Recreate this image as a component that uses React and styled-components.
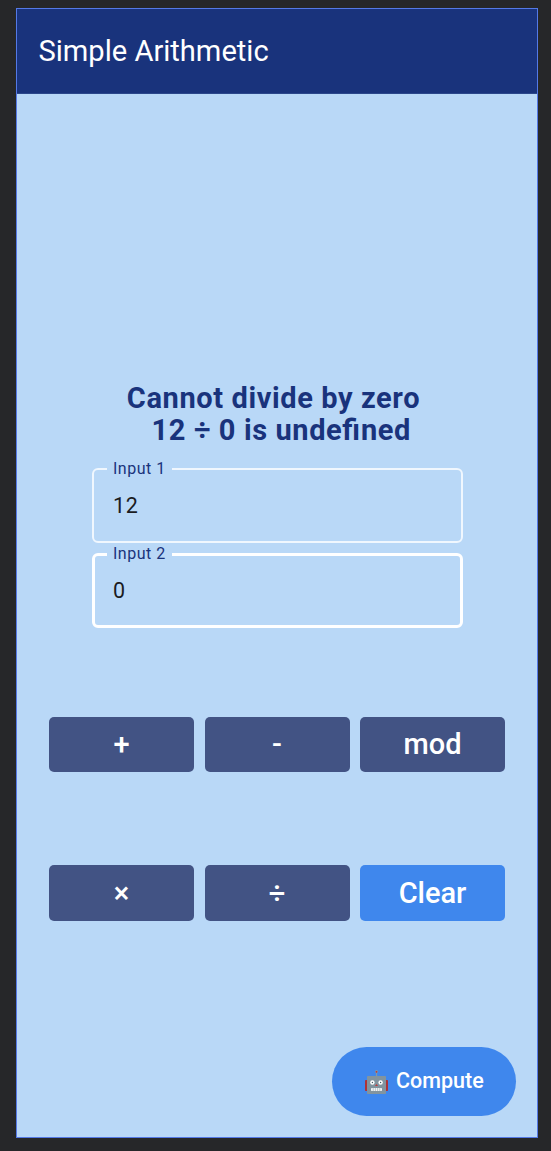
import React from "react";
import styled, { createGlobalStyle } from "styled-components";

const GlobalStyle = createGlobalStyle`
  *, *::before, *::after { box-sizing: border-box; }
  html, body { margin: 0; background: #262729; }
  body { font-family: Roboto, "Liberation Sans", sans-serif; }
`;

const Desk = styled.main`
  height: 1151px;
  padding: 8px 13px 13px 16px;
  background: #262729;
`;

const Screen = styled.div`
  display: flex;
  flex-direction: column;
  height: 1130px;
  border: 1px solid #5479e6;
  background: #b9d8f7;
`;

const AppBar = styled.header`
  display: flex;
  align-items: center;
  height: 85px;
  padding-left: 21.5px;
  border-bottom: 1px solid #2b478b;
  background: #19337c;
`;

const Title = styled.h1`
  margin: 0;
  color: #fff;
  font-size: 29.1px;
  font-weight: 400;
  line-height: 34px;
`;

const Content = styled.section`
  display: flex;
  flex: 1;
  flex-direction: column;
  padding: 288px 32px 21px;
`;

const Message = styled.p`
  margin: 0 0 14px;
  color: #19337c;
  font-size: 29px;
  font-weight: 700;
  letter-spacing: 0.6px;
  line-height: 32px;
  text-align: center;
  white-space: pre;
`;

const Line = styled.span`
  display: block;
  padding-left: ${(p) => p.$indent || 0}px;
  margin-left: -7px;
`;

const Ligature = styled.span`
  margin-right: 0.9px;
  letter-spacing: 0;
`;

const Fields = styled.div`
  display: flex;
  flex-direction: column;
  gap: 2px;
  padding: 0 42.5px 0 43px;
`;

const Field = styled.fieldset`
  height: 83px;
  min-width: 0;
  margin: 0;
  padding: 0 ${(p) => (p.$focused ? 18 : 19)}px 0 ${(p) => (p.$focused ? 12 : 13)}px;
  border: ${(p) => (p.$focused ? "3px solid #fff" : "2px solid #f0f7fe")};
  border-radius: 6px;
`;

const Label = styled.legend`
  height: 18px;
  padding: 0 6px;
  color: #19337c;
  font-size: 16px;
  letter-spacing: 0.5px;
  line-height: 18px;
`;

const Value = styled.div`
  padding: 14px 6px 0;
  color: #1b1c1f;
  font-size: 21.5px;
  letter-spacing: 0.65px;
  line-height: 28px;
`;

const KeyRow = styled.div`
  display: grid;
  grid-template-columns: repeat(3, 1fr);
  gap: 10.5px;
  height: ${(p) => p.$height}px;
  margin-top: ${(p) => p.$top}px;
`;

const Key = styled.button`
  padding: 0 0 1px;
  border: 0;
  border-radius: 5px;
  background: ${(p) => (p.$primary ? "#3f87ed" : "#425384")};
  color: #fff;
  font: 500 29px/34px Roboto, "Liberation Sans", sans-serif;
`;

const Compute = styled.button`
  display: flex;
  align-items: center;
  align-self: flex-end;
  gap: 7px;
  width: 184px;
  height: 69px;
  margin: auto -11px 0 0;
  padding: 0 0 1px 32px;
  border: 0;
  border-radius: 35px;
  background: #3f87ed;
  color: #fff;
  font: 500 21.5px/26px Roboto, "Liberation Sans", sans-serif;
`;

const RobotIcon = styled.svg`
  width: 25px;
  height: 25px;
`;

function Robot() {
  return (
    <RobotIcon viewBox="0 0 25 25" aria-hidden="true">
      <path d="M12.5 3v5" stroke="#829aa5" strokeWidth="1.2" />
      <circle cx="12.5" cy="2.6" r="1.5" fill="#829aa5" />
      <circle cx="12.5" cy="2.8" r="0.9" fill="#bd3335" />
      <rect x="1" y="11" width="3" height="11" rx="0.7" fill="#ad3238" />
      <rect x="21" y="11" width="3" height="11" rx="0.7" fill="#ad3238" />
      <rect x="3" y="7" width="19" height="18" rx="0.8" fill="#82949f" />
      <circle cx="8.4" cy="13.5" r="2.2" fill="#fff" />
      <circle cx="16.6" cy="13.5" r="2.2" fill="#fff" />
      <circle cx="8.4" cy="13.5" r="0.7" fill="#455a64" />
      <circle cx="16.6" cy="13.5" r="0.7" fill="#455a64" />
      <path d="M12.5 15l1.5 2h-3z" fill="#c13b3c" />
      <rect x="7" y="19" width="11" height="3" rx="0.8" fill="#f3f5f6" />
      <path d="M9.2 19v3M11.4 19v3M13.6 19v3M15.8 19v3" stroke="#82949f" strokeWidth="0.5" />
    </RobotIcon>
  );
}

export default function App() {
  return (
    <Desk>
      <GlobalStyle />
      <Screen>
        <AppBar>
          <Title>Simple Arithmetic</Title>
        </AppBar>
        <Content>
          <Message>
            <Line>Cannot divide by zero</Line>
            <Line $indent={15.6}>
              12 ÷ 0 is unde<Ligature>fi</Ligature>ned
            </Line>
          </Message>
          <Fields>
            <Field>
              <Label>Input 1</Label>
              <Value>12</Value>
            </Field>
            <Field $focused>
              <Label>Input 2</Label>
              <Value>0</Value>
            </Field>
          </Fields>
          <KeyRow $top={89} $height={55}>
            <Key>+</Key>
            <Key>-</Key>
            <Key>mod</Key>
          </KeyRow>
          <KeyRow $top={93} $height={56}>
            <Key>×</Key>
            <Key>÷</Key>
            <Key $primary>Clear</Key>
          </KeyRow>
          <Compute>
            <Robot />
            <span>Compute</span>
          </Compute>
        </Content>
      </Screen>
    </Desk>
  );
}
